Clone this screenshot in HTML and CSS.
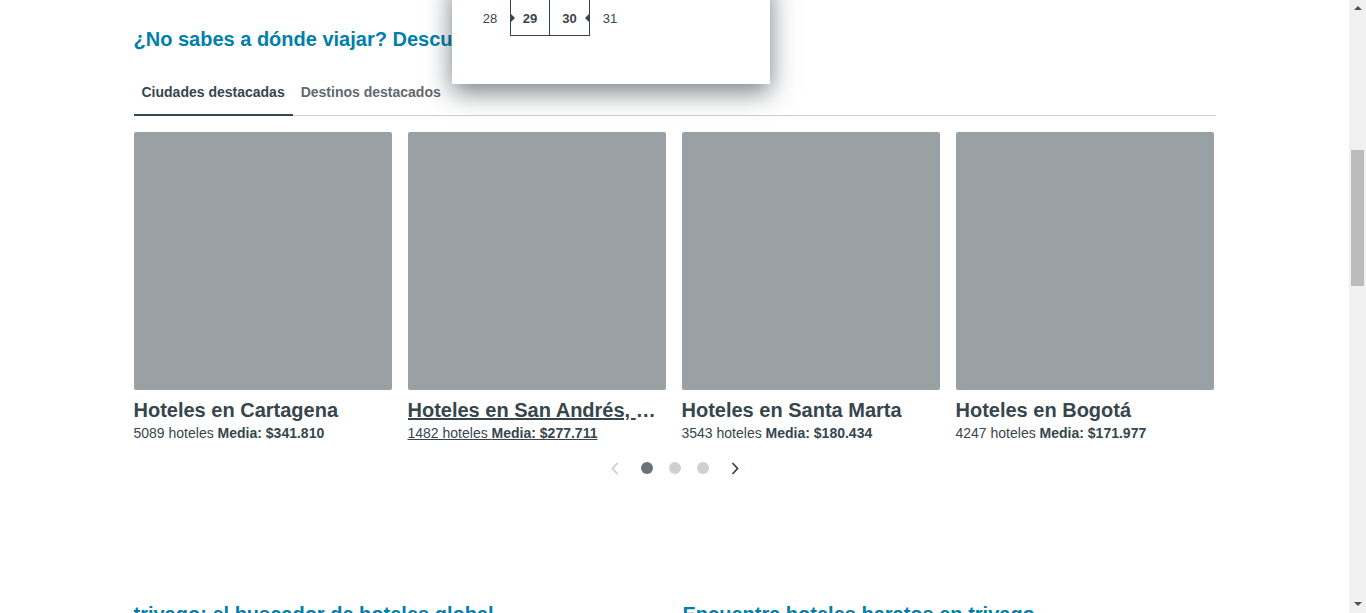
FILE: index.html
```html
<!DOCTYPE html>
<html lang="es">
<head>
  <meta charset="UTF-8">
  <meta name="viewport" content="width=device-width, initial-scale=1.0">
  <title>trivago - Ciudades destacadas</title>
  <link rel="stylesheet" href="styles.css">
</head>
<body>
  <div class="page">
    <!-- Calendario abierto desde el buscador -->
    <div class="calendar-popup">
      <div class="week">
        <span class="day">28</span>
        <span class="day selected start">29</span>
        <span class="day selected end">30</span>
        <span class="day">31</span>
        <span class="day"></span>
        <span class="day"></span>
        <span class="day"></span>
      </div>
    </div>

    <div class="container">
      <h2 class="section-title">¿No sabes a dónde viajar? Descubre nuevos destinos</h2>

      <div class="tabs">
        <button class="tab active">Ciudades destacadas</button>
        <button class="tab">Destinos destacados</button>
      </div>

      <div class="cards">
        <a class="card" href="#">
          <div class="card-image"></div>
          <h3 class="card-title">Hoteles en Cartagena</h3>
          <p class="card-info">5089 hoteles <strong>Media: $341.810</strong></p>
        </a>
        <a class="card hover" href="#">
          <div class="card-image"></div>
          <h3 class="card-title">Hoteles en San Andrés, Providencia y Santa Catalina</h3>
          <p class="card-info">1482 hoteles <strong>Media: $277.711</strong></p>
        </a>
        <a class="card" href="#">
          <div class="card-image"></div>
          <h3 class="card-title">Hoteles en Santa Marta</h3>
          <p class="card-info">3543 hoteles <strong>Media: $180.434</strong></p>
        </a>
        <a class="card" href="#">
          <div class="card-image"></div>
          <h3 class="card-title">Hoteles en Bogotá</h3>
          <p class="card-info">4247 hoteles <strong>Media: $171.977</strong></p>
        </a>
      </div>

      <div class="pager">
        <button class="pager-arrow disabled" aria-label="Anterior">
          <svg width="8" height="13" viewBox="0 0 8 13"><polyline points="6.5,1 1.5,6.5 6.5,12" fill="none" stroke="currentColor" stroke-width="1.8"/></svg>
        </button>
        <span class="dot active"></span>
        <span class="dot"></span>
        <span class="dot"></span>
        <button class="pager-arrow" aria-label="Siguiente">
          <svg width="8" height="13" viewBox="0 0 8 13"><polyline points="1.5,1 6.5,6.5 1.5,12" fill="none" stroke="currentColor" stroke-width="1.8"/></svg>
        </button>
      </div>

      <div class="info-columns">
        <h2 class="section-title">trivago: el buscador de hoteles global</h2>
        <h2 class="section-title">Encuentra hoteles baratos en trivago</h2>
      </div>
    </div>
  </div>

  <div class="scrollbar">
    <span class="scroll-up"></span>
    <div class="scroll-track">
      <div class="scroll-thumb"></div>
    </div>
    <span class="scroll-down"></span>
  </div>
</body>
</html>
```

FILE: styles.css
```css
html, body {
  height: 100%;
}
body {
  font-family: "Liberation Sans", Arial, sans-serif;
  margin: 0;
  padding: 0;
  background-color: #fff;
  color: #37454d;
  display: flex;
  overflow: hidden;
}
.page {
  flex: 1;
  position: relative;
  overflow: hidden;
}
.container {
  width: 1082px;
  margin: 0 auto;
  padding-top: 27px;
}
.section-title {
  font-size: 20px;
  line-height: 24px;
  font-weight: bold;
  color: #007fad;
  margin: 0;
  white-space: nowrap;
}

/* Tabs */
.tabs {
  display: flex;
  margin-top: 20px;
  border-bottom: 1px solid #cdd0d2;
}
.tab {
  font-family: inherit;
  font-size: 14px;
  line-height: 16px;
  font-weight: bold;
  color: #62696e;
  background: none;
  border: none;
  border-bottom: 2px solid transparent;
  margin-bottom: -1px;
  padding: 13px 8px 14px;
  cursor: pointer;
}
.tab.active {
  color: #37454d;
  border-bottom-color: #37454d;
}

/* Cards */
.cards {
  display: grid;
  grid-template-columns: repeat(4, 258px);
  column-gap: 16px;
  margin-top: 16px;
}
.card {
  display: block;
  color: #37454d;
  text-decoration: none;
  min-width: 0;
}
.card-image {
  height: 258px;
  background-color: #9aa1a4;
  border-radius: 2px;
}
.card-title {
  font-size: 20px;
  line-height: 24px;
  font-weight: bold;
  margin: 8px 0 0;
  white-space: nowrap;
  overflow: hidden;
  text-overflow: ellipsis;
}
.card-info {
  font-size: 14px;
  line-height: 16px;
  margin: 3px 0 0;
}
.card.hover .card-title,
.card.hover .card-info {
  text-decoration: underline;
}

/* Pager */
.pager {
  display: flex;
  justify-content: center;
  align-items: center;
  gap: 16px;
  height: 24px;
  margin-top: 15px;
}
.pager-arrow {
  width: 20px;
  height: 24px;
  padding: 0;
  border: none;
  background: none;
  color: #37454d;
  display: flex;
  align-items: center;
  justify-content: center;
  cursor: pointer;
}
.pager-arrow.disabled {
  color: #c9cdd0;
}
.dot {
  width: 12px;
  height: 12px;
  border-radius: 50%;
  background-color: #cdd1d4;
}
.dot.active {
  background-color: #6a737a;
}

.info-columns {
  display: grid;
  grid-template-columns: 1fr 1fr;
  column-gap: 16px;
  margin-top: 122px;
}

/* Calendar popup */
.calendar-popup {
  position: absolute;
  top: -20px;
  left: 452px;
  width: 280px;
  padding: 16px 20px 48px 18px;
  background-color: #fff;
  box-shadow: 0 8px 24px rgba(30, 40, 45, 0.6);
  z-index: 5;
}
.week {
  display: grid;
  grid-template-columns: repeat(7, 40px);
  height: 40px;
}
.day {
  position: relative;
  display: flex;
  align-items: center;
  justify-content: center;
  padding-top: 4px;
  font-size: 13px;
  color: #37454d;
  box-sizing: border-box;
}
.day.selected {
  font-weight: bold;
  border: 1px solid #37454d;
}
.day.end {
  border-left: none;
}
.day.start::before {
  content: "";
  position: absolute;
  left: 0;
  top: 17px;
  border-top: 4px solid transparent;
  border-bottom: 4px solid transparent;
  border-left: 4px solid #37454d;
}
.day.end::after {
  content: "";
  position: absolute;
  right: 0;
  top: 17px;
  border-top: 4px solid transparent;
  border-bottom: 4px solid transparent;
  border-right: 4px solid #37454d;
}

/* Scrollbar */
.scrollbar {
  width: 17px;
  flex-shrink: 0;
  background-color: #f1f1f1;
  display: flex;
  flex-direction: column;
  align-items: center;
}
.scroll-up,
.scroll-down {
  width: 0;
  height: 0;
  border-left: 4px solid transparent;
  border-right: 4px solid transparent;
  margin: 6px 0 7px;
}
.scroll-up {
  border-bottom: 4px solid #505050;
}
.scroll-down {
  border-top: 4px solid #505050;
}
.scroll-track {
  flex: 1;
  width: 100%;
  display: flex;
  justify-content: center;
}
.scroll-thumb {
  width: 13px;
  height: 136px;
  margin-top: 133px;
  background-color: #bcbcbc;
}
```
